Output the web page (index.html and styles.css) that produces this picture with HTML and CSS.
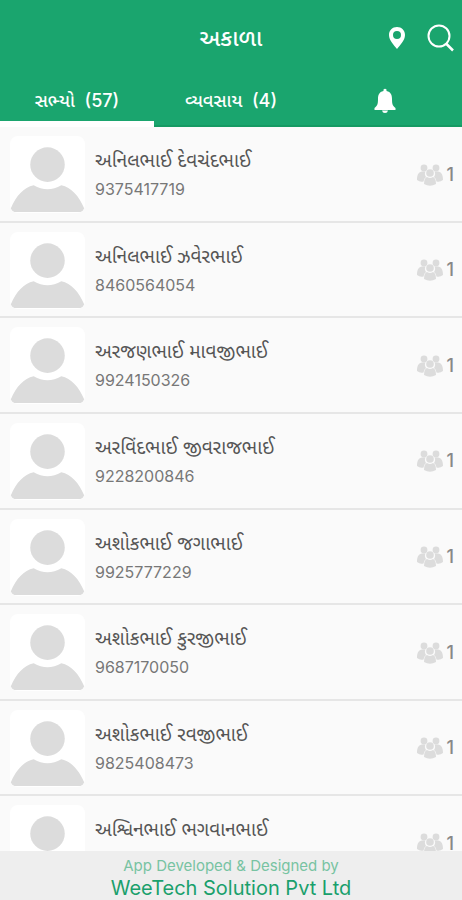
FILE: index.html
```html
<!DOCTYPE html>
<html lang="gu">
<head>
<meta charset="utf-8">
<meta name="viewport" content="width=device-width, initial-scale=1">
<title>અકાળા</title>
<link rel="stylesheet" href="styles.css">
</head>
<body>
<svg class="defs" aria-hidden="true">
  <symbol id="person" viewBox="0 0 76 78">
    <circle cx="38" cy="29" r="17.5"/>
    <path d="M24 50Q38 58 52 50C62 52 70 61 75 73Q76 77 71 77H5Q0 77 1 73C6 61 14 52 24 50Z"/>
  </symbol>
  <symbol id="group" viewBox="0 0 26 22">
    <circle cx="7" cy="4" r="3.4"/><circle cx="19" cy="4" r="3.4"/>
    <path d="M5 7.500C2 8 0 10 0 16Q3 18.500 6.500 17.500Q7 14 9 13Q7 10 8.500 7.500ZM21 7.500C24 8 26 10 26 16Q23 18.500 19.500 17.500Q19 14 17 13Q19 10 17.500 7.500Z"/>
    <circle cx="13" cy="9" r="3.800"/>
    <path d="M10 13Q13 15 16 13Q19 14 19 20Q13 23.500 7 20Q7 14 10 13Z"/>
  </symbol>
</svg>
<div class="app">
  <header class="header">
    <div class="titlebar">
      <h1 class="title">અકાળા</h1>
      <div class="actions">
        <button class="icon-button" type="button" aria-label="Location">
          <svg width="18" height="22" viewBox="0 0 18 22"><path fill="#fff" fill-rule="evenodd" d="M9 0C4.400 0 1 3.500 1 8C1 13.500 6 18 9 22C12 18 17 13.500 17 8C17 3.500 13.600 0 9 0ZM9 4A4 4 0 1 1 9 12A4 4 0 1 1 9 4Z"/></svg>
        </button>
        <button class="icon-button" type="button" aria-label="Search">
          <svg width="28" height="28" viewBox="0 0 28 28" fill="none" stroke="#fff"><circle cx="13" cy="12" r="10.500" stroke-width="2"/><path d="M20 19.500L27 26.500" stroke-width="2.500"/></svg>
        </button>
      </div>
    </div>
    <nav class="tabs">
      <button class="tab active" type="button">સભ્યો&nbsp; (57)</button>
      <button class="tab" type="button">વ્યવસાય&nbsp; (4)</button>
      <button class="tab" type="button" aria-label="Notifications">
        <svg width="22" height="26" viewBox="0 0 22 26" fill="#fff"><path d="M9.500 3V1.500Q11 0 12.500 1.500V3C17 4 18 7 18 11C18 17 19 18 21.500 20V22H.5V20C3 18 4 17 4 11C4 7 5 4 9.500 3ZM8 22.500H14Q13.500 25 11 25Q8.500 25 8 22.500Z"/></svg>
      </button>
    </nav>
  </header>
  <main class="content">
    <ul class="members">
      <li class="member"><svg class="avatar"><use href="#person"/></svg><div class="info"><h2 class="name">અનિલભાઈ દેવચંદભાઈ</h2><a class="phone" href="tel:9375417719">9375417719</a></div><div class="family"><svg class="group"><use href="#group"/></svg><span>1</span></div></li>
      <li class="member"><svg class="avatar"><use href="#person"/></svg><div class="info"><h2 class="name">અનિલભાઈ ઝવેરભાઈ</h2><a class="phone" href="tel:8460564054">8460564054</a></div><div class="family"><svg class="group"><use href="#group"/></svg><span>1</span></div></li>
      <li class="member"><svg class="avatar"><use href="#person"/></svg><div class="info"><h2 class="name">અરજણભાઈ માવજીભાઈ</h2><a class="phone" href="tel:9924150326">9924150326</a></div><div class="family"><svg class="group"><use href="#group"/></svg><span>1</span></div></li>
      <li class="member"><svg class="avatar"><use href="#person"/></svg><div class="info"><h2 class="name">અરવિંદભાઈ જીવરાજભાઈ</h2><a class="phone" href="tel:9228200846">9228200846</a></div><div class="family"><svg class="group"><use href="#group"/></svg><span>1</span></div></li>
      <li class="member"><svg class="avatar"><use href="#person"/></svg><div class="info"><h2 class="name">અશોકભાઈ જગાભાઈ</h2><a class="phone" href="tel:9925777229">9925777229</a></div><div class="family"><svg class="group"><use href="#group"/></svg><span>1</span></div></li>
      <li class="member"><svg class="avatar"><use href="#person"/></svg><div class="info"><h2 class="name">અશોકભાઈ કુરજીભાઈ</h2><a class="phone" href="tel:9687170050">9687170050</a></div><div class="family"><svg class="group"><use href="#group"/></svg><span>1</span></div></li>
      <li class="member"><svg class="avatar"><use href="#person"/></svg><div class="info"><h2 class="name">અશોકભાઈ રવજીભાઈ</h2><a class="phone" href="tel:9825408473">9825408473</a></div><div class="family"><svg class="group"><use href="#group"/></svg><span>1</span></div></li>
      <li class="member"><svg class="avatar"><use href="#person"/></svg><div class="info"><h2 class="name">અશ્વિનભાઈ ભગવાનભાઈ</h2></div><div class="family"><svg class="group"><use href="#group"/></svg><span>1</span></div></li>
    </ul>
  </main>
  <footer class="footer">
    <span class="credit">App Developed &amp; Designed by</span>
    <span class="company">WeeTech Solution Pvt Ltd</span>
  </footer>
</div>
</body>
</html>
```
FILE: styles.css
```css
* { box-sizing: border-box; }
body { margin: 0; font-family: Inter, "Noto Sans Gujarati", "Noto Sans", sans-serif; color: #555; }
button { border: 0; padding: 0; background: none; color: inherit; font: inherit; }
svg { display: block; }
.defs { display: none; }
.app { display: flex; flex-direction: column; height: 100vh; background: #fafafa; }
.header { flex: none; background: #1aa56e; color: #fff; }
.titlebar { display: grid; grid-template-columns: 1fr auto 1fr; align-items: center; height: 76px; padding: 0 8px; }
.title { grid-column: 2; margin: 0; font-size: 23px; line-height: 32px; font-weight: 500; }
.actions { display: flex; justify-content: flex-end; align-items: center; gap: 20px; }
.tabs { display: grid; grid-template-columns: repeat(3, 1fr); height: 51px; }
.tab { display: flex; align-items: center; justify-content: center; font-size: 18px; line-height: 24px; font-weight: 500; border-bottom: 2px solid #159a63; }
.tab.active { border-bottom: 6px solid #fff; padding-top: 4px; }
.content { flex: 1; min-height: 0; overflow: hidden; }
.members { display: grid; grid-template-rows: repeat(8, 1fr); height: 765px; list-style: none; margin: 0; padding: 0; }
.member { display: flex; padding: 9px 8px 0 10px; border-bottom: 2px solid #e6e6e6; }
.avatar { flex: none; width: 75px; height: 77px; border-radius: 8px; background: #fff; fill: #dcdcdc; }
.info { flex: 1; display: flex; flex-direction: column; padding: 11px 0 0 10px; }
.name { margin: 0; font-size: 19px; line-height: 28px; font-weight: 400; white-space: nowrap; }
.phone { font-size: 16px; line-height: 28px; color: #777; text-decoration: none; }
.family { display: flex; align-items: center; gap: 4px; height: 77px; font-size: 18px; line-height: 20px; font-weight: 500; color: #888; }
.group { width: 26px; height: 22px; fill: #dcdcdc; }
.footer { flex: none; display: flex; flex-direction: column; align-items: center; height: 49px; padding-top: 4px; background: #eee; }
.credit { font-size: 15px; line-height: 21px; color: #78c3a2; }
.company { font-size: 20px; line-height: 24px; color: #1aa06c; }
```
